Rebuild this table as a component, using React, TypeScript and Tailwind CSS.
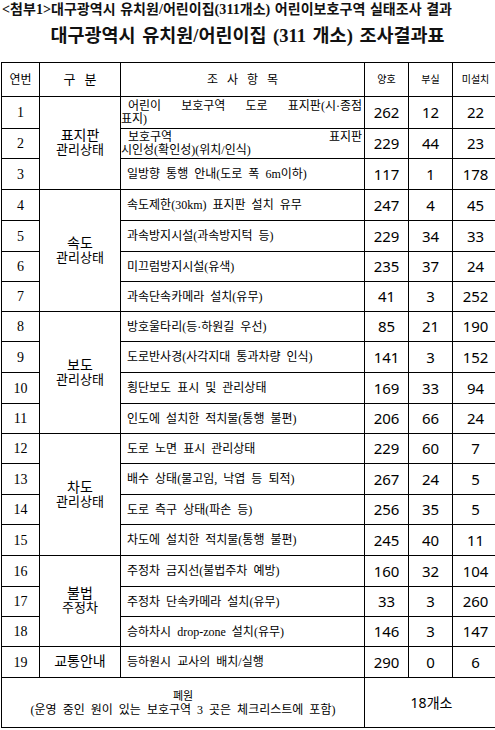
import React from "react";

type Row = {
  n: number;
  h: string;
  item: React.ReactNode;
  a: string;
  b: string;
  c: string;
  group?: { rows: number; top: string; bottom?: string };
};

const serif = "font-['Liberation_Serif','Noto_Sans_CJK_KR',serif]";
const sans = "font-['Noto_Sans','Noto_Sans_CJK_KR',sans-serif]";

const rows: Row[] = [
  {
    n: 1,
    h: "h-[32px]",
    item: (
      <div className="leading-[13px]">
        <div className="flex justify-between pl-[7px] pr-[2px]">
          <span>어린이</span>
          <span>보호구역</span>
          <span>도로</span>
          <span>표지판(시·종점</span>
        </div>
        <div>표지)</div>
      </div>
    ),
    a: "262",
    b: "12",
    c: "22",
    group: { rows: 3, top: "표지판", bottom: "관리상태" },
  },
  {
    n: 2,
    h: "h-[30px]",
    item: (
      <div className="leading-[13px]">
        <div className="flex justify-between pl-[7px] pr-[2px]">
          <span>보호구역</span>
          <span>표지판</span>
        </div>
        <div>시인성(확인성)(위치/인식)</div>
      </div>
    ),
    a: "229",
    b: "44",
    c: "23",
  },
  { n: 3, h: "h-[31px]", item: "일방향 통행 안내(도로 폭 6m이하)", a: "117", b: "1", c: "178" },
  {
    n: 4,
    h: "h-[31px]",
    item: "속도제한(30km) 표지판 설치 유무",
    a: "247",
    b: "4",
    c: "45",
    group: { rows: 4, top: "속도", bottom: "관리상태" },
  },
  { n: 5, h: "h-[31px]", item: "과속방지시설(과속방지턱 등)", a: "229", b: "34", c: "33" },
  { n: 6, h: "h-[30px]", item: "미끄럼방지시설(유색)", a: "235", b: "37", c: "24" },
  { n: 7, h: "h-[30px]", item: "과속단속카메라 설치(유무)", a: "41", b: "3", c: "252" },
  {
    n: 8,
    h: "h-[30px]",
    item: "방호울타리(등·하원길 우선)",
    a: "85",
    b: "21",
    c: "190",
    group: { rows: 4, top: "보도", bottom: "관리상태" },
  },
  { n: 9, h: "h-[31px]", item: "도로반사경(사각지대 통과차량 인식)", a: "141", b: "3", c: "152" },
  { n: 10, h: "h-[31px]", item: "횡단보도 표시 및 관리상태", a: "169", b: "33", c: "94" },
  { n: 11, h: "h-[30px]", item: "인도에 설치한 적치물(통행 불편)", a: "206", b: "66", c: "24" },
  {
    n: 12,
    h: "h-[30px]",
    item: "도로 노면 표시 관리상태",
    a: "229",
    b: "60",
    c: "7",
    group: { rows: 4, top: "차도", bottom: "관리상태" },
  },
  { n: 13, h: "h-[31px]", item: "배수 상태(물고임, 낙엽 등 퇴적)", a: "267", b: "24", c: "5" },
  { n: 14, h: "h-[30px]", item: "도로 측구 상태(파손 등)", a: "256", b: "35", c: "5" },
  { n: 15, h: "h-[31px]", item: "차도에 설치한 적치물(통행 불편)", a: "245", b: "40", c: "11" },
  {
    n: 16,
    h: "h-[31px]",
    item: "주정차 금지선(불법주차 예방)",
    a: "160",
    b: "32",
    c: "104",
    group: { rows: 3, top: "불법", bottom: "주정차" },
  },
  { n: 17, h: "h-[30px]", item: "주정차 단속카메라 설치(유무)", a: "33", b: "3", c: "260" },
  { n: 18, h: "h-[30px]", item: "승하차시 drop-zone 설치(유무)", a: "146", b: "3", c: "147" },
  {
    n: 19,
    h: "h-[31px]",
    item: "등하원시 교사의 배치/실행",
    a: "290",
    b: "0",
    c: "6",
    group: { rows: 1, top: "교통안내" },
  },
];

const cell = "border border-black p-0 align-middle";

export default function App() {
  return (
    <div className="w-[495px] h-[730px] overflow-hidden bg-white text-black">
      <div
        className={`h-[20px] pl-[2px] whitespace-nowrap text-[14px] leading-[20px] font-bold tracking-[0.05px] [word-spacing:1px] text-[#111] ${serif}`}
      >
        &lt;첨부1&gt;대구광역시 유치원/어린이집(311개소) 어린이보호구역 실태조사 결과
      </div>
      <div
        className={`mt-[6px] text-center whitespace-nowrap text-[18.5px] leading-[21px] font-bold text-[#111] [word-spacing:2px] ${serif}`}
      >
        대구광역시 유치원/어린이집 (311 개소) 조사결과표
      </div>
      <table className="mt-[15px] ml-[1px] w-[497px] table-fixed border-collapse">
        <colgroup>
          <col className="w-[38px]" />
          <col className="w-[81px]" />
          <col className="w-[244px]" />
          <col className="w-[44px]" />
          <col className="w-[44px]" />
          <col className="w-[46px]" />
        </colgroup>
        <tbody>
          <tr className="h-[34px]">
            <td className={`${cell} text-center text-[12px] ${serif}`}>연번</td>
            <td className={`${cell} text-center text-[13px] ${serif} [word-spacing:6px]`}>구 분</td>
            <td className={`${cell} text-center text-[12px] ${serif} [word-spacing:6px]`}>조 사 항 목</td>
            <td className={`${cell} text-center text-[10px] ${serif}`}>양호</td>
            <td className={`${cell} text-center text-[10px] ${serif}`}>부실</td>
            <td className={`${cell} text-center text-[10px] ${serif}`}>미설치</td>
          </tr>
          {rows.map((r) => (
            <tr key={r.n} className={r.h}>
              <td className={`${cell} text-center text-[14px] ${serif}`}>{r.n}</td>
              {r.group && (
                <td rowSpan={r.group.rows} className={`${cell} text-center ${serif}`}>
                  <div className="text-[14px] leading-[14px]">{r.group.top}</div>
                  {r.group.bottom && (
                    <div className="text-[13px] leading-[14px]">{r.group.bottom}</div>
                  )}
                </td>
              )}
              <td className={`${cell} text-[12px] ${serif} [word-spacing:3px]`}>
                {typeof r.item === "string" ? <div className="pl-[6px] whitespace-nowrap">{r.item}</div> : r.item}
              </td>
              <td className={`${cell} text-center text-[15px] ${sans}`}>{r.a}</td>
              <td className={`${cell} text-center text-[15px] ${sans}`}>{r.b}</td>
              <td className={`${cell} text-center text-[15px] ${sans}`}>{r.c}</td>
            </tr>
          ))}
          <tr className="h-[50px]">
            <td colSpan={3} className={`${cell} text-center ${serif}`}>
              <div className="text-[11px] leading-[14px]">폐원</div>
              <div className="text-[12px] leading-[14px] [word-spacing:3px]">
                (운영 중인 원이 있는 보호구역 3 곳은 체크리스트에 포함)
              </div>
            </td>
            <td colSpan={3} className={`${cell} text-center text-[14px] ${sans}`}>
              18개소
            </td>
          </tr>
        </tbody>
      </table>
    </div>
  );
}
